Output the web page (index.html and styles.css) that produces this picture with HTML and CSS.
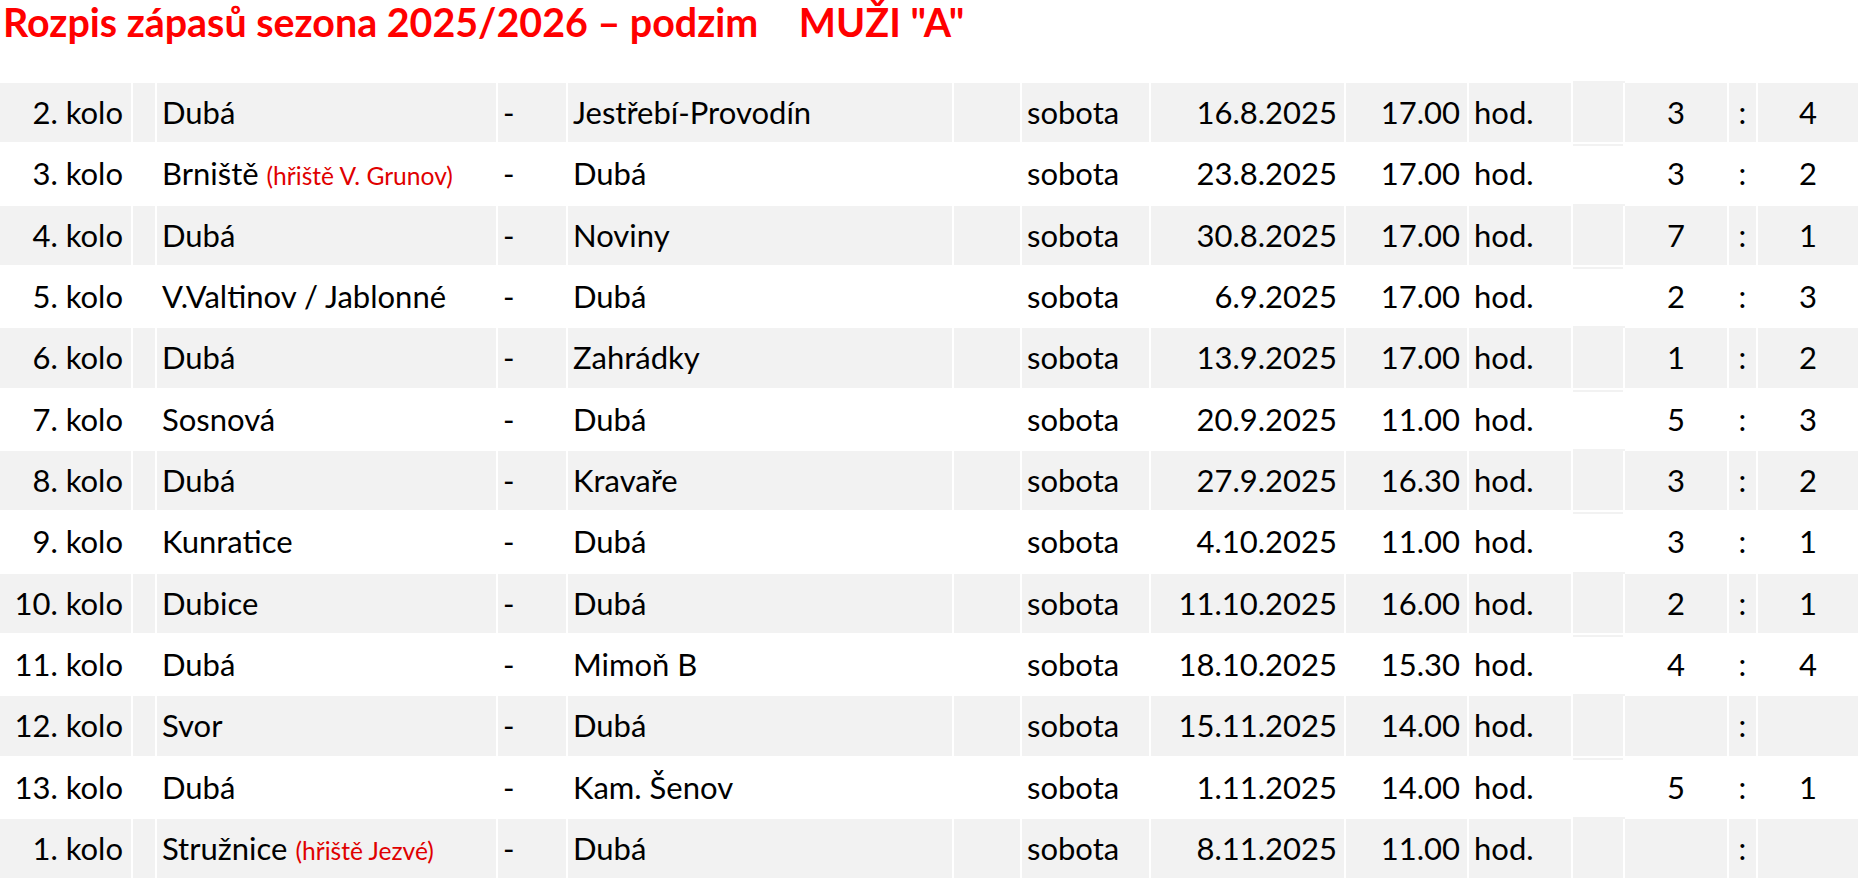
FILE: index.html
```html
<!DOCTYPE html>
<html lang="cs">
<head>
<meta charset="utf-8">
<title>Rozpis zápasů sezona 2025/2026 – podzim</title>
<link rel="stylesheet" href="styles.css">
</head>
<body>
<h1 class="title">Rozpis zápasů sezona 2025/2026 – podzim <span class="team">MUŽI "A"</span></h1>
<div class="schedule">
  <div class="row alt"><div class="c round">2. kolo</div><div class="c"></div><div class="c">Dubá</div><div class="c">-</div><div class="c">Jestřebí-Provodín</div><div class="c"></div><div class="c">sobota</div><div class="c num">16.8.2025</div><div class="c num">17.00</div><div class="c">hod.</div><div class="c gap"></div><div class="c mid">3</div><div class="c mid">:</div><div class="c mid last">4</div></div>
  <div class="row"><div class="c round">3. kolo</div><div class="c"></div><div class="c">Brniště <span class="note">(hřiště V. Grunov)</span></div><div class="c">-</div><div class="c">Dubá</div><div class="c"></div><div class="c">sobota</div><div class="c num">23.8.2025</div><div class="c num">17.00</div><div class="c">hod.</div><div class="c gap"></div><div class="c mid">3</div><div class="c mid">:</div><div class="c mid last">2</div></div>
  <div class="row alt"><div class="c round">4. kolo</div><div class="c"></div><div class="c">Dubá</div><div class="c">-</div><div class="c">Noviny</div><div class="c"></div><div class="c">sobota</div><div class="c num">30.8.2025</div><div class="c num">17.00</div><div class="c">hod.</div><div class="c gap"></div><div class="c mid">7</div><div class="c mid">:</div><div class="c mid last">1</div></div>
  <div class="row"><div class="c round">5. kolo</div><div class="c"></div><div class="c">V.Valtinov / Jablonné</div><div class="c">-</div><div class="c">Dubá</div><div class="c"></div><div class="c">sobota</div><div class="c num">6.9.2025</div><div class="c num">17.00</div><div class="c">hod.</div><div class="c gap"></div><div class="c mid">2</div><div class="c mid">:</div><div class="c mid last">3</div></div>
  <div class="row alt"><div class="c round">6. kolo</div><div class="c"></div><div class="c">Dubá</div><div class="c">-</div><div class="c">Zahrádky</div><div class="c"></div><div class="c">sobota</div><div class="c num">13.9.2025</div><div class="c num">17.00</div><div class="c">hod.</div><div class="c gap"></div><div class="c mid">1</div><div class="c mid">:</div><div class="c mid last">2</div></div>
  <div class="row"><div class="c round">7. kolo</div><div class="c"></div><div class="c">Sosnová</div><div class="c">-</div><div class="c">Dubá</div><div class="c"></div><div class="c">sobota</div><div class="c num">20.9.2025</div><div class="c num">11.00</div><div class="c">hod.</div><div class="c gap"></div><div class="c mid">5</div><div class="c mid">:</div><div class="c mid last">3</div></div>
  <div class="row alt"><div class="c round">8. kolo</div><div class="c"></div><div class="c">Dubá</div><div class="c">-</div><div class="c">Kravaře</div><div class="c"></div><div class="c">sobota</div><div class="c num">27.9.2025</div><div class="c num">16.30</div><div class="c">hod.</div><div class="c gap"></div><div class="c mid">3</div><div class="c mid">:</div><div class="c mid last">2</div></div>
  <div class="row"><div class="c round">9. kolo</div><div class="c"></div><div class="c">Kunratice</div><div class="c">-</div><div class="c">Dubá</div><div class="c"></div><div class="c">sobota</div><div class="c num">4.10.2025</div><div class="c num">11.00</div><div class="c">hod.</div><div class="c gap"></div><div class="c mid">3</div><div class="c mid">:</div><div class="c mid last">1</div></div>
  <div class="row alt"><div class="c round">10. kolo</div><div class="c"></div><div class="c">Dubice</div><div class="c">-</div><div class="c">Dubá</div><div class="c"></div><div class="c">sobota</div><div class="c num">11.10.2025</div><div class="c num">16.00</div><div class="c">hod.</div><div class="c gap"></div><div class="c mid">2</div><div class="c mid">:</div><div class="c mid last">1</div></div>
  <div class="row"><div class="c round">11. kolo</div><div class="c"></div><div class="c">Dubá</div><div class="c">-</div><div class="c">Mimoň B</div><div class="c"></div><div class="c">sobota</div><div class="c num">18.10.2025</div><div class="c num">15.30</div><div class="c">hod.</div><div class="c gap"></div><div class="c mid">4</div><div class="c mid">:</div><div class="c mid last">4</div></div>
  <div class="row alt"><div class="c round">12. kolo</div><div class="c"></div><div class="c">Svor</div><div class="c">-</div><div class="c">Dubá</div><div class="c"></div><div class="c">sobota</div><div class="c num">15.11.2025</div><div class="c num">14.00</div><div class="c">hod.</div><div class="c gap"></div><div class="c mid"></div><div class="c mid">:</div><div class="c mid last"></div></div>
  <div class="row"><div class="c round">13. kolo</div><div class="c"></div><div class="c">Dubá</div><div class="c">-</div><div class="c">Kam. Šenov</div><div class="c"></div><div class="c">sobota</div><div class="c num">1.11.2025</div><div class="c num">14.00</div><div class="c">hod.</div><div class="c gap"></div><div class="c mid">5</div><div class="c mid">:</div><div class="c mid last">1</div></div>
  <div class="row alt"><div class="c round">1. kolo</div><div class="c"></div><div class="c">Stružnice <span class="note">(hřiště Jezvé)</span></div><div class="c">-</div><div class="c">Dubá</div><div class="c"></div><div class="c">sobota</div><div class="c num">8.11.2025</div><div class="c num">11.00</div><div class="c">hod.</div><div class="c gap"></div><div class="c mid"></div><div class="c mid">:</div><div class="c mid last"></div></div>
</div>
</body>
</html>
```

FILE: styles.css
```css
html, body {
  margin: 0;
  padding: 0;
  background: #ffffff;
}

body {
  width: 1858px;
  font-family: Lato, "Liberation Sans", sans-serif;
  color: #000000;
}

.title {
  box-sizing: border-box;
  height: 83px;
  margin: 0;
  padding: 2px 0 0 3px;
  font-size: 39.4px;
  line-height: 1;
  font-weight: 700;
  color: #ff0000;
  white-space: nowrap;
}

.title .team {
  margin-left: 31px;
}

.schedule {
  display: flex;
  flex-direction: column;
}

.row {
  display: grid;
  grid-template-columns: 133px 24px 341px 70px 386px 68px 129px 195px 123px 104px 52px 104px 29px 100px;
  height: 61.33px;
}

.c {
  box-sizing: border-box;
  border-right: 2px solid #ffffff;
  border-bottom: 2px solid #ffffff;
  padding: 11px 5px 0 5px;
  font-size: 31px;
  line-height: 1.2;
  white-space: nowrap;
  overflow: visible;
}

.row.alt .c {
  background: #f2f2f2;
}

.row.alt .c.gap {
  box-shadow: 0 -2px 0 #f2f2f2, 0 2px 0 #f2f2f2;
}

.round {
  text-align: right;
  padding-right: 8px;
}

.num {
  text-align: right;
  padding-right: 7px;
}

.mid {
  text-align: center;
  padding-left: 0;
  padding-right: 0;
}

.last {
  border-right: 0;
}

.note {
  font-size: 24.6px;
  color: #e00000;
}
```
